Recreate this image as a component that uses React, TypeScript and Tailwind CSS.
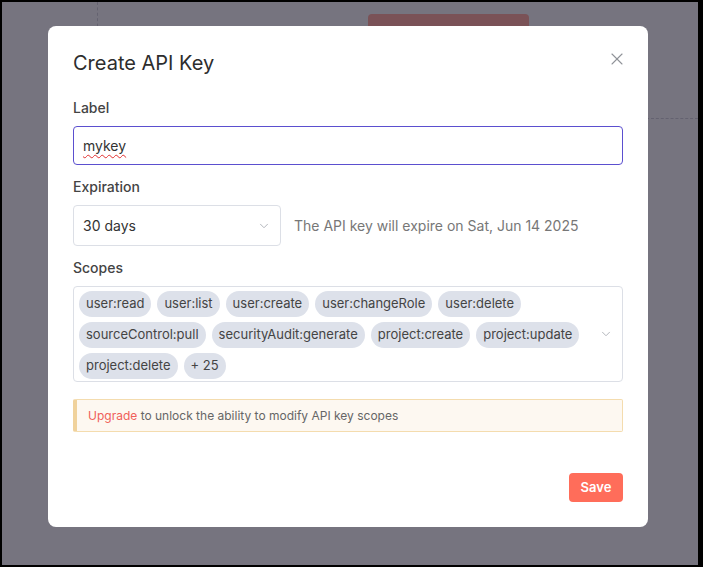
import { X, ChevronDown } from "lucide-react";

const scopes = [
  "user:read",
  "user:list",
  "user:create",
  "user:changeRole",
  "user:delete",
  "sourceControl:pull",
  "securityAudit:generate",
  "project:create",
  "project:update",
  "project:delete",
  "+ 25",
];

export default function App() {
  return (
    <div
      className="relative h-[567px] w-[703px] overflow-hidden border-t-2 border-l-2 border-b-2 border-r-[5px] border-black bg-[#76747f]"
      style={{ fontFamily: "Inter, 'Noto Sans', sans-serif" }}
    >
      {/* page behind the overlay */}
      <div className="absolute left-[95px] top-0 h-[30px] border-l border-dashed border-[#646270]" />
      <div className="absolute left-[600px] right-0 top-[116px] border-t border-dashed border-[#646270]" />
      <div className="absolute left-[366px] top-[12px] h-[40px] w-[161px] rounded-[4px] bg-[#7a5257]" />

      <div className="relative pl-[46px] pt-[24px]">
        <div className="flex h-[501px] w-[600px] flex-col rounded-[8px] bg-white px-[25px] pt-[25px] pb-[25px]">
          <div className="flex items-start justify-between">
            <h2 className="text-[20px] leading-[24px] text-[#2d2d2d]">Create API Key</h2>
            <X className="mr-[-4px] mt-[-2px] h-[20px] w-[20px] text-[#909399]" strokeWidth={1.3} />
          </div>

          <div className="mt-[23px] text-[14px] leading-[20px] font-medium text-[#444]">Label</div>
          <div className="mt-[8px] flex h-[39px] items-center rounded-[4px] border border-[#5b4fcf] px-[9px] text-[14px] text-[#333]">
            <span className="underline decoration-wavy decoration-[#e03030] decoration-1 underline-offset-[3px]">mykey</span>
          </div>

          <div className="mt-[12px] text-[14px] leading-[20px] font-medium text-[#444]">Expiration</div>
          <div className="mt-[8px] flex items-center gap-[13px]">
            <div className="flex h-[41px] w-[208px] items-center justify-between rounded-[4px] border border-[#dcdfe6] pl-[9px] pr-[9px] text-[14px] text-[#333]">
              <span>30 days</span>
              <ChevronDown className="h-[14px] w-[14px] text-[#a8abb2]" strokeWidth={1.5} />
            </div>
            <span className="text-[14px] text-[#777]">The API key will expire on Sat, Jun 14 2025</span>
          </div>

          <div className="mt-[12px] text-[14px] leading-[20px] font-medium text-[#444]">Scopes</div>
          <div className="mt-[8px] flex h-[96px] items-center rounded-[4px] border border-[#dcdfe6] pl-[5px] pr-[9px]">
            <div className="flex flex-1 flex-wrap gap-x-[6px] gap-y-[5px] pr-[4px] pt-[1px]">
              {scopes.map((s) => (
                <span
                  key={s}
                  className="flex h-[26px] items-center rounded-full bg-[#dde1ea] px-[7px] text-[13px] text-[#444]"
                >
                  {s}
                </span>
              ))}
            </div>
            <ChevronDown className="h-[14px] w-[14px] text-[#a8abb2]" strokeWidth={1.5} />
          </div>

          <div className="mt-[17px] flex h-[33px] items-center rounded-[2px] border border-l-4 border-[#f4dcae] border-l-[#f0d29c] bg-[#fdf8f1] px-[11px] text-[12px] text-[#666]">
            <span className="text-[#f0605a]">Upgrade</span>
            <span>&nbsp;to unlock the ability to modify API key scopes</span>
          </div>

          <div className="mt-auto flex justify-end">
            <button className="h-[29px] w-[54px] rounded-[4px] bg-[#ff6d5a] text-[13px] font-semibold text-white">
              Save
            </button>
          </div>
        </div>
      </div>
    </div>
  );
}
